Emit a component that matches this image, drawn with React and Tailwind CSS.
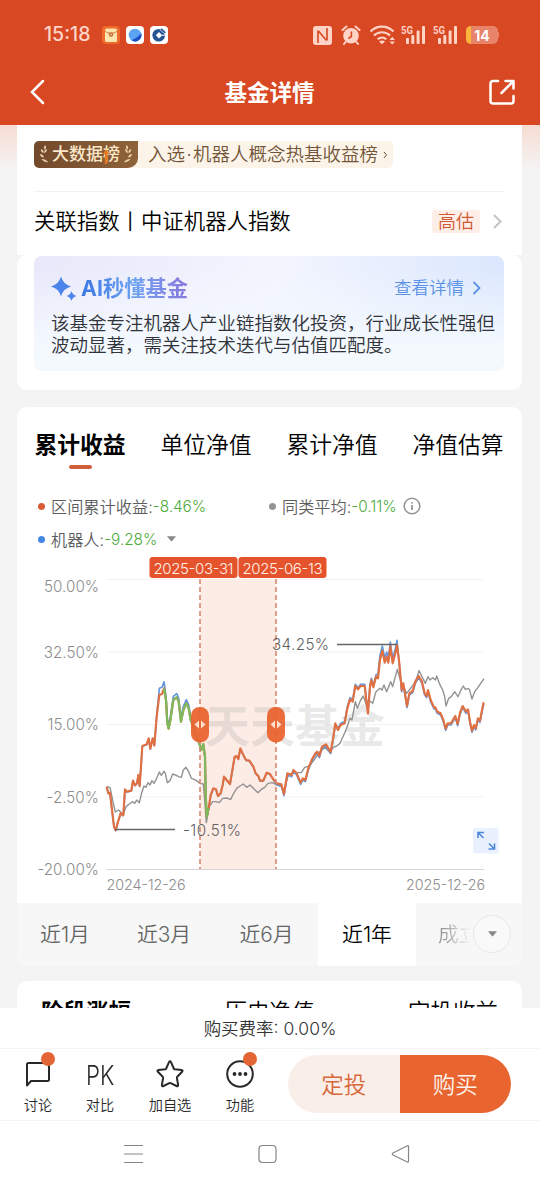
import { useState } from 'react'

const RETURN_TABS = ['累计收益', '单位净值', '累计净值', '净值估算']
const HISTORY_TABS = ['阶段涨幅', '历史净值', '定投收益']

const PERIODS = [
  { label: '近1月', width: 'w-[96px]' },
  { label: '近3月', width: 'w-[102px]' },
  { label: '近6月', width: 'w-[103px]' },
  { label: '近1年', width: 'w-[98px]' },
]

const AXIS = [
  { label: '50.00%', line: 579.5, text: 592 },
  { label: '32.50%', line: 652, text: 657.5 },
  { label: '15.00%', line: 724.5, text: 729.5 },
  { label: '-2.50%', line: 797, text: 802.5 },
  { label: '-20.00%', line: 869.5, text: 875 },
]

// series are plotted on a grid three times finer than the chart
const FUND = [
  [50, 380], [55, 400], [60, 398], [66, 450], [72, 500], [77, 511], [84, 485], [92, 460], [100, 465], [105, 388],
  [110, 395], [124, 392], [129, 362], [135, 376], [141, 370], [145, 345], [149, 378], [157, 258], [170, 253], [176, 235],
  [181, 266], [188, 235], [193, 256], [200, 170], [208, 105], [216, 102], [222, 85], [228, 120], [232, 190], [236, 206],
  [242, 175], [250, 120], [260, 112], [266, 125], [273, 185], [280, 150], [289, 130], [296, 145], [302, 180], [310, 200],
  [318, 225], [328, 250], [334, 270], [340, 252], [345, 290], [347, 400], [350, 470], [356, 445], [362, 405], [370, 385],
  [378, 388], [384, 408], [392, 400], [398, 375], [402, 350], [410, 360], [420, 372], [428, 325], [434, 290], [440, 288],
  [445, 297], [451, 265], [460, 285], [468, 300], [478, 302], [490, 320], [497, 340], [505, 348], [510, 362], [520, 362],
  [530, 338], [540, 342], [550, 358], [560, 370], [574, 373], [582, 402], [592, 340], [605, 345], [610, 330], [620, 340],
  [632, 368], [638, 355], [646, 360], [655, 325], [665, 300], [676, 280], [682, 275], [688, 288], [696, 260], [708, 253],
  [722, 276], [730, 230], [736, 190], [744, 210], [752, 195], [764, 190], [772, 145], [780, 118], [788, 125], [796, 78],
  [804, 88], [812, 78], [824, 78], [830, 130], [834, 160], [840, 80], [844, 60], [850, 82], [858, 50], [864, 55],
  [870, 0], [877, -28], [884, 8], [890, -10], [895, 8], [901, -40], [908, 10], [916, -20], [921, -45], [928, 10],
  [935, 90], [940, 70], [945, 100], [951, 138], [958, 100], [968, 93], [976, 65], [986, 48], [996, 65], [1004, 100],
  [1010, 108], [1014, 90], [1022, 120], [1032, 142], [1036, 142], [1042, 155], [1052, 160], [1060, 180], [1067, 206], [1073, 190],
  [1083, 190], [1090, 178], [1096, 168], [1103, 192], [1110, 158], [1118, 138], [1128, 155], [1134, 148], [1140, 185], [1146, 212],
  [1152, 195], [1157, 205], [1164, 175], [1170, 182], [1176, 150], [1181, 127],
]

const PEERS = [
  [50, 380], [60, 382], [70, 430], [76, 456], [86, 450], [92, 456], [98, 468], [108, 440], [118, 432], [128, 425],
  [134, 430], [140, 420], [148, 428], [156, 395], [162, 378], [168, 382], [174, 368], [180, 375], [186, 362], [192, 370],
  [200, 355], [208, 336], [214, 346], [222, 334], [226, 340], [232, 368], [240, 362], [248, 342], [256, 345], [266, 350],
  [274, 352], [280, 330], [288, 322], [296, 335], [304, 355], [312, 358], [320, 362], [330, 370], [340, 372], [344, 420],
  [349, 488], [358, 440], [368, 425], [378, 425], [388, 428], [398, 415], [410, 414], [422, 418], [430, 402], [440, 385],
  [450, 378], [460, 372], [470, 382], [480, 375], [490, 385], [504, 398], [514, 388], [524, 382], [534, 370], [546, 368],
  [560, 374], [574, 380], [582, 392], [595, 345], [605, 340], [615, 338], [634, 338], [644, 322], [658, 318], [676, 295],
  [690, 275], [705, 262], [720, 278], [730, 262], [740, 258], [750, 250], [760, 228], [770, 205], [780, 175], [786, 180],
  [796, 125], [802, 145], [812, 120], [820, 108], [830, 138], [836, 120], [848, 130], [858, 95], [870, 85], [876, 90],
  [882, 75], [890, 95], [902, 65], [908, 80], [916, 50], [922, 28], [928, 50], [932, 60], [940, 80], [950, 100],
  [958, 90], [970, 75], [980, 55], [987, 32], [996, 50], [1006, 70], [1014, 50], [1020, 60], [1028, 53], [1036, 60],
  [1040, 48], [1048, 70], [1058, 90], [1064, 110], [1068, 138], [1076, 115], [1084, 110], [1094, 95], [1104, 110], [1112, 92],
  [1120, 78], [1126, 88], [1134, 86], [1138, 88], [1146, 117], [1154, 95], [1162, 85], [1172, 70], [1182, 56],
]

const INDEX = FUND.map(([x, y]) => {
  if (x > 925) return [x, y + 5]
  if (x > 550 && x < 740) return [x, y + 5]
  if (x > 860) return [x, y - 14]
  if (x > 740) return [x, y - 5]
  if (x > 205 && x < 310) return [x, y - (x < 226 ? 20 : 11)]
  return [x, y + 1]
})

const DRAWDOWN = FUND.filter(([x]) => x >= 222 && x <= 356)

const toPoints = (series) => series.map((p) => p.join(',')).join(' ')

function StatusBar() {
  return (
    <div className="flex h-[68px] items-center pt-[2px] pl-[44px] pr-[41px]">
      <span className="w-[58px] text-[19.5px] font-medium text-[#ffd3c6]">15:18</span>
      <div className="flex gap-[6px]">
        <svg width="18" height="18" viewBox="0 0 18 18">
          <rect width="18" height="18" rx="4" fill="#ee6a2d" />
          <rect x="3" y="2.5" width="12" height="13.5" rx="1.5" fill="#fde5ae" />
          <path d="M3 5.5Q9 9 15 5.5" fill="none" stroke="#d98545" />
          <circle cx="9" cy="8.5" r="2.3" fill="#c96a3c" />
          <circle cx="9" cy="8.5" r="0.8" fill="#fde5ae" />
        </svg>
        <svg width="18" height="18" viewBox="0 0 18 18">
          <rect width="18" height="18" rx="4" fill="#fff" />
          <circle cx="9" cy="9" r="6.3" fill="#5ba3f5" />
          <path d="M5.5 14.3C10 12.5 13.5 9.5 15.2 7.3A6.3 6.3 0 0 1 5.5 14.3Z" fill="#1c50c2" />
        </svg>
        <svg width="18" height="18" viewBox="0 0 18 18">
          <rect width="18" height="18" rx="4" fill="#fff" />
          <circle cx="8.7" cy="9.2" r="6.3" fill="#245491" />
          <path d="M9 6l3.2 3.2L9 12.4 5.8 9.2Z" fill="#fff" />
          <path d="M9.5 3l6 5.5M12 9.2h5" stroke="#fff" strokeWidth="1" />
          <path d="M11 2.8l4.3 4" stroke="#245491" strokeWidth="1.6" />
        </svg>
      </div>
      <div className="ml-auto flex items-center text-[#ffd3c6]">
        <svg width="19" height="19" viewBox="0 0 19 19">
          <rect width="19" height="19" rx="3" fill="currentColor" />
          <path d="M5 17V4.5M14 14.5V2M5.5 5l8 9.5" fill="none" stroke="#d84822" strokeWidth="1.6" />
        </svg>
        <svg className="ml-[9px]" width="20" height="20" viewBox="0 0 20 20" fill="currentColor">
          <circle cx="10" cy="10.8" r="7.8" />
          <path d="M1.5 5L5.5 1.5M18.5 5L14.5 1.5M4.5 17l-1.5 2M15.5 17l1.5 2" stroke="currentColor" strokeWidth="2" strokeLinecap="round" />
          <path d="M10.4 6.5v5l-3 2" fill="none" stroke="#d84822" strokeWidth="1.6" />
        </svg>
        <svg className="ml-[8px]" width="27" height="20" viewBox="0 0 27 20" fill="none" stroke="currentColor" strokeWidth="2.2">
          <path d="M1.5 6.5a16 16 0 0 1 23 0M5 10.5a11.5 11.5 0 0 1 16 0M8.7 14.2a6.5 6.5 0 0 1 8.6 0" />
          <path d="M10 16.5q3-2 6 0l-3 2.8Z" fill="currentColor" stroke="none" />
          <path d="M20.5 15l2.7-3.2L26 15ZM20.5 16.5l2.7 3L26 16.5Z" fill="currentColor" stroke="none" />
        </svg>
        <Signal className="ml-[5px]" />
        <Signal className="ml-[7px]" />
        <div className="relative ml-[8px] flex h-[18px] w-[32px] items-center justify-center overflow-hidden rounded-[5px] bg-[#e88469] text-[14px] font-bold text-white">
          <span className="absolute inset-y-0 left-0 w-[5px] bg-[#fbb43c]" />
          14
        </div>
        <span className="h-[6px] w-px rounded-r bg-[#e88469]" />
      </div>
    </div>
  )
}

function Signal({ className }) {
  return (
    <svg className={className} width="25" height="20" viewBox="0 0 25 20" fill="currentColor">
      <text x="0" y="8.5" fontSize="10" fontWeight="700" fontFamily="Roboto" textLength="12" lengthAdjust="spacingAndGlyphs">5G</text>
      <rect x="5" y="13" width="3" height="6" rx="1" />
      <rect x="10.3" y="10" width="3" height="9" rx="1" />
      <rect x="15.6" y="5.5" width="3" height="13.5" rx="1" />
      <rect x="21" y="1" width="3" height="18" rx="1" />
    </svg>
  )
}

function TitleBar() {
  return (
    <div className="flex h-[48px] items-center justify-between pr-[25px] pl-[29px]">
      <svg width="17" height="26" viewBox="0 0 17 26" fill="none" stroke="#fff" strokeWidth="2.5" strokeLinecap="round">
        <path d="M14 2L3 13l11 11" />
      </svg>
      <h1 className="pt-[2px] pl-[4px] text-[22.5px] font-bold text-white">基金详情</h1>
      <svg width="26" height="26" viewBox="0 0 26 26" fill="none" stroke="#fff" strokeWidth="2.5" strokeLinecap="round" strokeLinejoin="round">
        <path d="M9 2H4a2.5 2.5 0 0 0-2.5 2.5V22A2.5 2.5 0 0 0 4 24.5h18a2.5 2.5 0 0 0 2.5-2.5V17M12.5 14L24 2.5M16.5 2H24.5V9.5" />
      </svg>
    </div>
  )
}

function Laurel({ flip }) {
  return (
    <svg className={flip ? '-scale-x-100' : ''} width="10" height="19" viewBox="0 0 10 19" fill="#ecd3ab">
      <path d="M5 0q2 2 0 5q-2-2 0-5ZM1 4q3 1 2.5 4q-3-1-2.5-4ZM0 9q3 0 4 3.5q-3.5 0-4-3.5ZM1.5 14q4-.5 6.5 3q-4 1-6.5-3ZM7 4q0 3-3 4q0-3 3-4Z" />
    </svg>
  )
}

function IndexSection() {
  return (
    <section className="h-[130px] bg-white px-[17px] pt-[16px]">
      <div className="flex h-[27px] w-[359px] items-center rounded-[5px] bg-[#fcf4e9] text-[#735438]">
        <div className="flex h-full w-[104px] items-center justify-center gap-[2px] rounded-l-[5px] rounded-br-[10px] bg-gradient-to-r from-[#73492c] to-[#8f6339] text-[17px] font-medium text-[#fbe8ca]">
          <Laurel />
          <span className="relative whitespace-nowrap">
            大数据榜
            <svg className="absolute top-[7px] left-[51px]" width="6" height="15" viewBox="0 0 6 15" fill="#e97a24">
              <path d="M3 0L6 5H4.2v10H1.8V5H0Z" />
            </svg>
          </span>
          <Laurel flip />
        </div>
        <span className="ml-[10px] text-[18.5px] whitespace-nowrap">
          入选<span className="inline-block w-[8px] text-center">·</span>机器人概念热基收益榜
        </span>
        <svg className="ml-[5px]" width="5" height="8" viewBox="0 0 5 8" fill="none" stroke="#735438">
          <path d="M1 1l2.5 3L1 7" />
        </svg>
      </div>
      <div className="mt-[23px] flex h-[60px] items-center border-t border-[#f2f2f2] text-black">
        <span className="text-[21.4px]">关联指数丨中证机器人指数</span>
        <span className="ml-auto rounded-[3px] bg-[#fdeee8] px-[6px] text-[18px] leading-[23px] text-[#cf5731]">高估</span>
        <svg className="mr-[3px] ml-[13px]" width="9" height="15" viewBox="0 0 9 15" fill="none" stroke="#c3c3c3" strokeWidth="2">
          <path d="M1 1l6.5 6.5L1 14" />
        </svg>
      </div>
    </section>
  )
}

function AiSummary() {
  return (
    <section className="h-[135px] rounded-[10px] bg-white pr-[18px] pl-[17px] pt-px">
      <div className="h-[115px] rounded-[8px] bg-[linear-gradient(180deg,transparent_10%,#f4f9fe_80%),linear-gradient(100deg,#e8e8fa,#f3f5fe_50%,#d9e6fd)] px-[17px] pt-[16px]">
        <div className="flex h-[32px] items-center">
          <svg width="26" height="26" viewBox="0 0 26 26" fill="#4b83ea">
            <path d="M10 1.5Q12 9 20 11.5Q12 13.5 10 21.5Q8 13.5 0 11.5Q8 9 10 1.5ZM20.5 16Q21.5 20 25.5 21Q21.5 22 20.5 26Q19.5 22 15.5 21Q19.5 20 20.5 16Z" />
          </svg>
          <h2 className="ml-[4px] bg-gradient-to-r from-[#3a76e4] via-[#6da2f1] to-[#8777dd] bg-clip-text pt-px text-[21.3px] font-bold text-transparent">AI秒懂基金</h2>
          <span className="ml-auto text-[17.5px] text-[#5b92e6]">查看详情</span>
          <svg className="mr-[6px] ml-[8px]" width="9" height="14" viewBox="0 0 9 14" fill="none" stroke="#5b92e6" strokeWidth="1.8">
            <path d="M1.5 1l6 6-6 6" />
          </svg>
        </div>
        <p className="mt-[9px] text-[18.5px] leading-[21.5px] whitespace-nowrap text-[#303339]">
          该基金专注机器人产业链指数化投资，行业成长性强但
          <br />
          波动显著，需关注技术迭代与估值匹配度。
        </p>
      </div>
    </section>
  )
}

function LegendItem({ dot, label, value, children }) {
  return (
    <div className="flex items-center">
      <span className={`mr-[6px] size-[7px] rounded-full ${dot}`} />
      <span className="pt-px text-[16.2px] text-[#5d5d5d]">{label}:</span>
      <span className="pt-px text-[15.3px] text-[#4eab3d]">{value}</span>
      {children}
    </div>
  )
}

function DateFlag({ x, label }) {
  return (
    <g>
      <rect x={x} y="557" width="88" height="21" rx="3" fill="#e5532c" />
      <text x={x + 4} y="573.5" fontSize="15" fill="#fff0e8" textLength="80">{label}</text>
    </g>
  )
}

function RangeHandle({ x }) {
  return (
    <g>
      <rect x={x - 9} y="707" width="18" height="35.5" rx="8.5" fill="#e9642f" fillOpacity=".94" />
      <path d={`M${x - 1} 720.5v8l-4.5-4ZM${x + 1} 720.5v8l4.5-4Z`} fill="#ffe0d0" />
    </g>
  )
}

function ReturnChart() {
  return (
    <svg className="block" width="505" height="347" viewBox="17 556 505 347" fontFamily="Inter" fontSize="15.2">
      {AXIS.map((tick, i) => (
        <g key={tick.label}>
          <line x1="107" x2="484" y1={tick.line} y2={tick.line} stroke={i === 4 ? '#d6d6d6' : '#f3f3f3'} />
          <text x="99" y={tick.text} fill="#8d8d8d" textAnchor="end">{tick.label}</text>
        </g>
      ))}
      <rect x="200" y="579" width="76" height="290" fill="#fcece5" />
      <text x="205" y="743" fontSize="45" fontWeight="700" fontFamily="'Noto Sans CJK SC', sans-serif" fill="#555" fillOpacity=".14">天天基金</text>
      <g transform="translate(90 660) scale(.33333)" fill="none" strokeLinejoin="round">
        <polyline points={toPoints(PEERS)} stroke="#929292" strokeWidth="4.2" />
        <polyline points={toPoints(INDEX)} stroke="#6597dc" strokeWidth="5" />
        <polyline points={toPoints(FUND)} stroke="#e06f42" strokeWidth="6.5" />
        <polyline points={toPoints(DRAWDOWN)} stroke="#7cba5b" strokeWidth="6.5" />
      </g>
      <path d="M200 579V869M276 579V869" stroke="#d28a70" strokeWidth="1.6" strokeDasharray="5 3" />
      <path d="M337 644.5H397M115 829.5H175" stroke="#666" strokeWidth="1.4" />
      <text x="272" y="650" fill="#5f5f5f" textLength="57">34.25%</text>
      <text x="183" y="835.5" fill="#5f5f5f" textLength="58">-10.51%</text>
      <RangeHandle x={200} />
      <RangeHandle x={276} />
      <DateFlag x={149.5} label="2025-03-31" />
      <DateFlag x={238.5} label="2025-06-13" />
      <rect x="473" y="828" width="25.5" height="25.5" rx="2" fill="#e8f1fd" />
      <path d="M478 838v-5.5h6M478 832.5l5.5 5.5M488.5 849h6v-5.5M489 843.5l5.5 5.5" fill="none" stroke="#4d87db" strokeWidth="1.6" />
      <g fontSize="14.3" fill="#8d8d8d">
        <text x="106.5" y="889.5" textLength="79">2024-12-26</text>
        <text x="406" y="889.5" textLength="79">2025-12-26</text>
      </g>
    </svg>
  )
}

function ReturnsCard() {
  const [tab, setTab] = useState('累计收益')
  const [period, setPeriod] = useState('近1年')

  return (
    <section className="mt-[17px] h-[559px] overflow-hidden rounded-[10px] bg-white">
      <div className="flex h-[83px] gap-[35px] pt-[20px] pl-[17.5px]">
        {RETURN_TABS.map((name) => (
          <button
            key={name}
            onClick={() => setTab(name)}
            className={`flex w-[91px] flex-col items-center text-[22.8px] leading-[36px] whitespace-nowrap text-black ${tab === name ? 'font-bold' : ''}`}
          >
            {name}
            {tab === name && <span className="mt-[2px] h-[4px] w-[23px] rounded-full bg-[#d05f3c]" />}
          </button>
        ))}
      </div>
      <div className="flex h-[33px] items-center pl-[21px]">
        <div className="w-[231px]">
          <LegendItem dot="bg-[#d95b34]" label="区间累计收益" value="-8.46%" />
        </div>
        <LegendItem dot="bg-[#949494]" label="同类平均" value="-0.11%">
          <svg className="ml-[6px]" width="18" height="18" viewBox="0 0 18 18" fill="none" stroke="#969696" strokeWidth="1.5">
            <circle cx="9" cy="9" r="7.8" />
            <path d="M9 8v5M9 5v1.5" strokeWidth="1.8" />
          </svg>
        </LegendItem>
      </div>
      <div className="flex h-[33px] items-center pl-[21px]">
        <LegendItem dot="bg-[#4388e6]" label="机器人" value="-9.28%">
          <svg className="ml-[10px]" width="9" height="6" viewBox="0 0 10 6" fill="#898989">
            <path d="M0 0H10L5.5 5.5H4.5Z" />
          </svg>
        </LegendItem>
      </div>
      <ReturnChart />
      <div className="relative flex h-[63px] bg-[#f7f7f7]">
        {PERIODS.map(({ label, width }) => (
          <button
            key={label}
            onClick={() => setPeriod(label)}
            className={`${width} pt-px text-[20.8px] ${period === label ? 'bg-white text-black' : 'text-[#656565]'}`}
          >
            {label}
          </button>
        ))}
        <span className="w-[54px] self-center overflow-hidden bg-gradient-to-r from-[#999] from-50% to-[#f7f7f7] bg-clip-text pt-px pl-[22px] text-[20.8px] whitespace-nowrap text-transparent">成立来</span>
        <button className="absolute top-[12px] right-[11px] flex size-[38px] items-center justify-center rounded-full border border-[#e8e8e8] bg-[#f9f9f9]">
          <svg width="9" height="6" viewBox="0 0 10 6" fill="#888">
            <path d="M0 0H10L5.5 5.5H4.5Z" />
          </svg>
        </button>
      </div>
    </section>
  )
}

function ToolItem({ label, badge, children }) {
  return (
    <button className="relative flex w-[70px] flex-col items-center text-[#292929]">
      <span className="flex h-[32px] items-center">{children}</span>
      <span className="mt-[5px] text-[14.2px] leading-[20px]">{label}</span>
      {badge && <span className="absolute -top-[6px] left-[38px] size-[14px] rounded-full bg-[#e36536]" />}
    </button>
  )
}

function BottomBar() {
  return (
    <footer className="bg-white">
      <div className="h-[40px] text-center text-[17.5px] leading-[41px] text-[#333]">
        购买费率: 0.00%
      </div>
      <div className="flex h-[73px] border-y border-[#f4f4f4] pt-[9px] pl-[3px]">
        <ToolItem label="讨论" badge>
          <svg width="26" height="28" viewBox="0 0 26 28" fill="none" stroke="currentColor" strokeWidth="2" strokeLinejoin="round">
            <path d="M2 4.5a1.500 1.5 0 0 1 1.5-1.5h19A1.5 1.5 0 0 1 24 4.5v15a1.5 1.5 0 0 1-1.5 1.5H6l-4 4.5Z" />
          </svg>
        </ToolItem>
        <div className="-ml-[8px]">
          <ToolItem label="对比">
            <span className="scale-x-[.82] pt-[2px] text-[27px] leading-none">PK</span>
          </ToolItem>
        </div>
        <ToolItem label="加自选">
          <svg width="28" height="28" viewBox="0 0 28 28" fill="none" stroke="currentColor" strokeWidth="2" strokeLinejoin="round">
            <path d="M13 2.2q1-1.8 2 0l2.8 6.3q.3.7 1 .8l6.6.7q2 .3.7 1.7l-4.8 5q-.5.5-.4 1.2l1.2 7q.1 1.9-1.6 1.1l-5.8-2.9q-.7-.3-1.4 0L7.5 26q-1.7.8-1.6-1.1l1.2-7q.1-.7-.4-1.2l-4.8-5q-1.3-1.4.7-1.7l6.6-.7q.7-.1 1-.8Z" />
          </svg>
        </ToolItem>
        <ToolItem label="功能" badge>
          <svg width="28" height="28" viewBox="0 0 28 28" fill="currentColor">
            <circle cx="14" cy="14" r="12.8" fill="none" stroke="currentColor" strokeWidth="2" />
            <circle cx="8.5" cy="14" r="1.9" />
            <circle cx="14" cy="14" r="1.9" />
            <circle cx="19.5" cy="14" r="1.9" />
          </svg>
        </ToolItem>
        <div className="-mt-[3px] ml-[13px] flex h-[58px] w-[223px] overflow-hidden rounded-full text-[22.5px]">
          <button className="flex-1 bg-[#faeee9] pt-px text-[#d9673c]">定投</button>
          <button className="flex-1 bg-[#e86530] pt-px text-[#fff3eb]">购买</button>
        </div>
      </div>
      <div className="flex h-[66px] items-center justify-between px-[124px]">
        <svg width="19" height="20" viewBox="0 0 19 20" fill="none" stroke="#858585" strokeWidth="1.2">
          <path d="M0 1.5H19M0 10H19M0 18.5H19" />
        </svg>
        <svg width="19" height="20" viewBox="0 0 19 20" fill="none" stroke="#858585" strokeWidth="1.2">
          <rect x="1" y="1.5" width="17" height="17" rx="3.5" />
        </svg>
        <svg className="mr-[6px]" width="19" height="20" viewBox="0 0 19 20" fill="none" stroke="#858585" strokeWidth="1.2">
          <path d="M16.3 1.7Q17.5 1.2 17.5 2.5V17Q17.5 18.5 16.3 18L2 11Q.5 10 2 9Z" />
        </svg>
      </div>
    </footer>
  )
}

export default function App() {
  return (
    <div className="flex h-[1187px] w-[540px] flex-col overflow-hidden bg-[#f4f4f4] font-['Inter','Noto_Sans_CJK_SC',sans-serif] font-[350]">
      <header className="h-[125px] shrink-0 bg-[#d84822]">
        <StatusBar />
        <TitleBar />
      </header>
      <main className="min-h-0 flex-1 overflow-hidden bg-gradient-to-b from-[#f6dcd2] to-[#f4f4f4] to-[45px] px-[17px] pr-[18px]">
        <IndexSection />
        <AiSummary />
        <ReturnsCard />
        <section className="mt-[15px] flex h-[100px] justify-between rounded-t-[10px] bg-white px-[24px] pt-[14px] text-[22.5px] text-black">
          {HISTORY_TABS.map((name, i) => (
            <span key={name} className={i === 0 ? 'font-bold' : ''}>{name}</span>
          ))}
        </section>
      </main>
      <BottomBar />
    </div>
  )
}
